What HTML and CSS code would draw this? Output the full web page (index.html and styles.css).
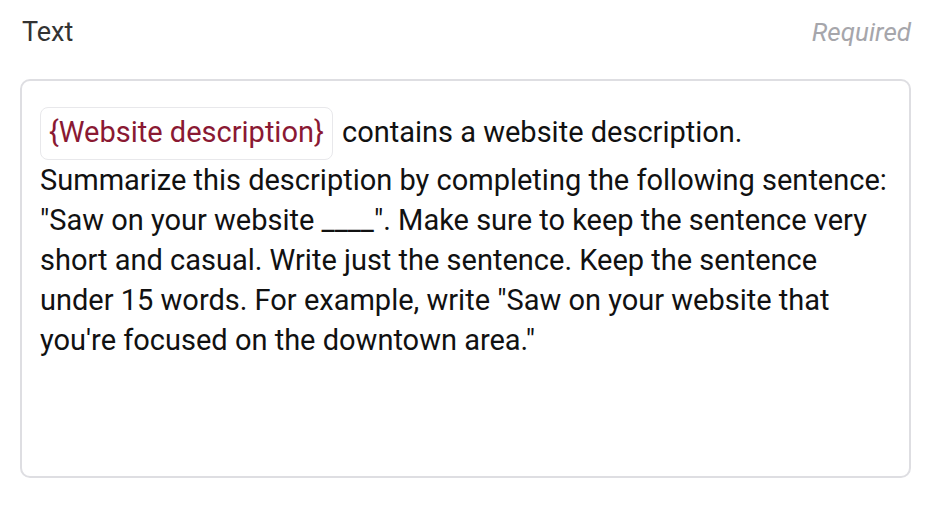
FILE: index.html
```html
<!DOCTYPE html>
<html>
<head>
<meta charset="utf-8">
<link rel="stylesheet" href="styles.css">
</head>
<body>
<div class="field">
  <div class="field-head">
    <span class="label">Text</span>
    <span class="required">Required</span>
  </div>
  <div class="editor">
    <p class="content"><span class="chip">{Website description}</span> contains a website description.<br>Summarize this description by completing the following sentence: "Saw on your website ____". Make sure to keep the sentence very short and casual. Write just the sentence. Keep the sentence under 15 words. For example, write "Saw on your website that you're focused on the downtown area."</p>
  </div>
</div>
</body>
</html>
```
FILE: styles.css
```css
html, body {
  margin: 0;
  padding: 0;
  background: #ffffff;
}
body {
  font-family: Roboto, "Noto Sans", sans-serif;
  color: #1a1a1a;
}
.field {
  padding: 14px 19px 0 20px;
}
.field-head {
  display: flex;
  justify-content: space-between;
  align-items: center;
  padding: 0 0 0 2px;
  height: 36px;
}
.label {
  font-size: 27px;
  color: #333333;
}
.required {
  font-size: 26px;
  font-style: italic;
  color: #a6a6ab;
}
.editor {
  margin-top: 29px;
  height: 399px;
  border: 2px solid #dedee2;
  border-radius: 10px;
  padding: 26px 18px 0 18px;
  box-sizing: border-box;
}
.content {
  margin: 0;
  font-size: 29px;
  line-height: 40px;
  color: #111111;
}
.chip {
  display: inline-block;
  border: 1.5px solid #e8e8eb;
  border-radius: 8px;
  padding: 4px 8px 7px 8px;
  line-height: 40px;
  color: #8a1933;
  margin-right: 2px;
}
```
